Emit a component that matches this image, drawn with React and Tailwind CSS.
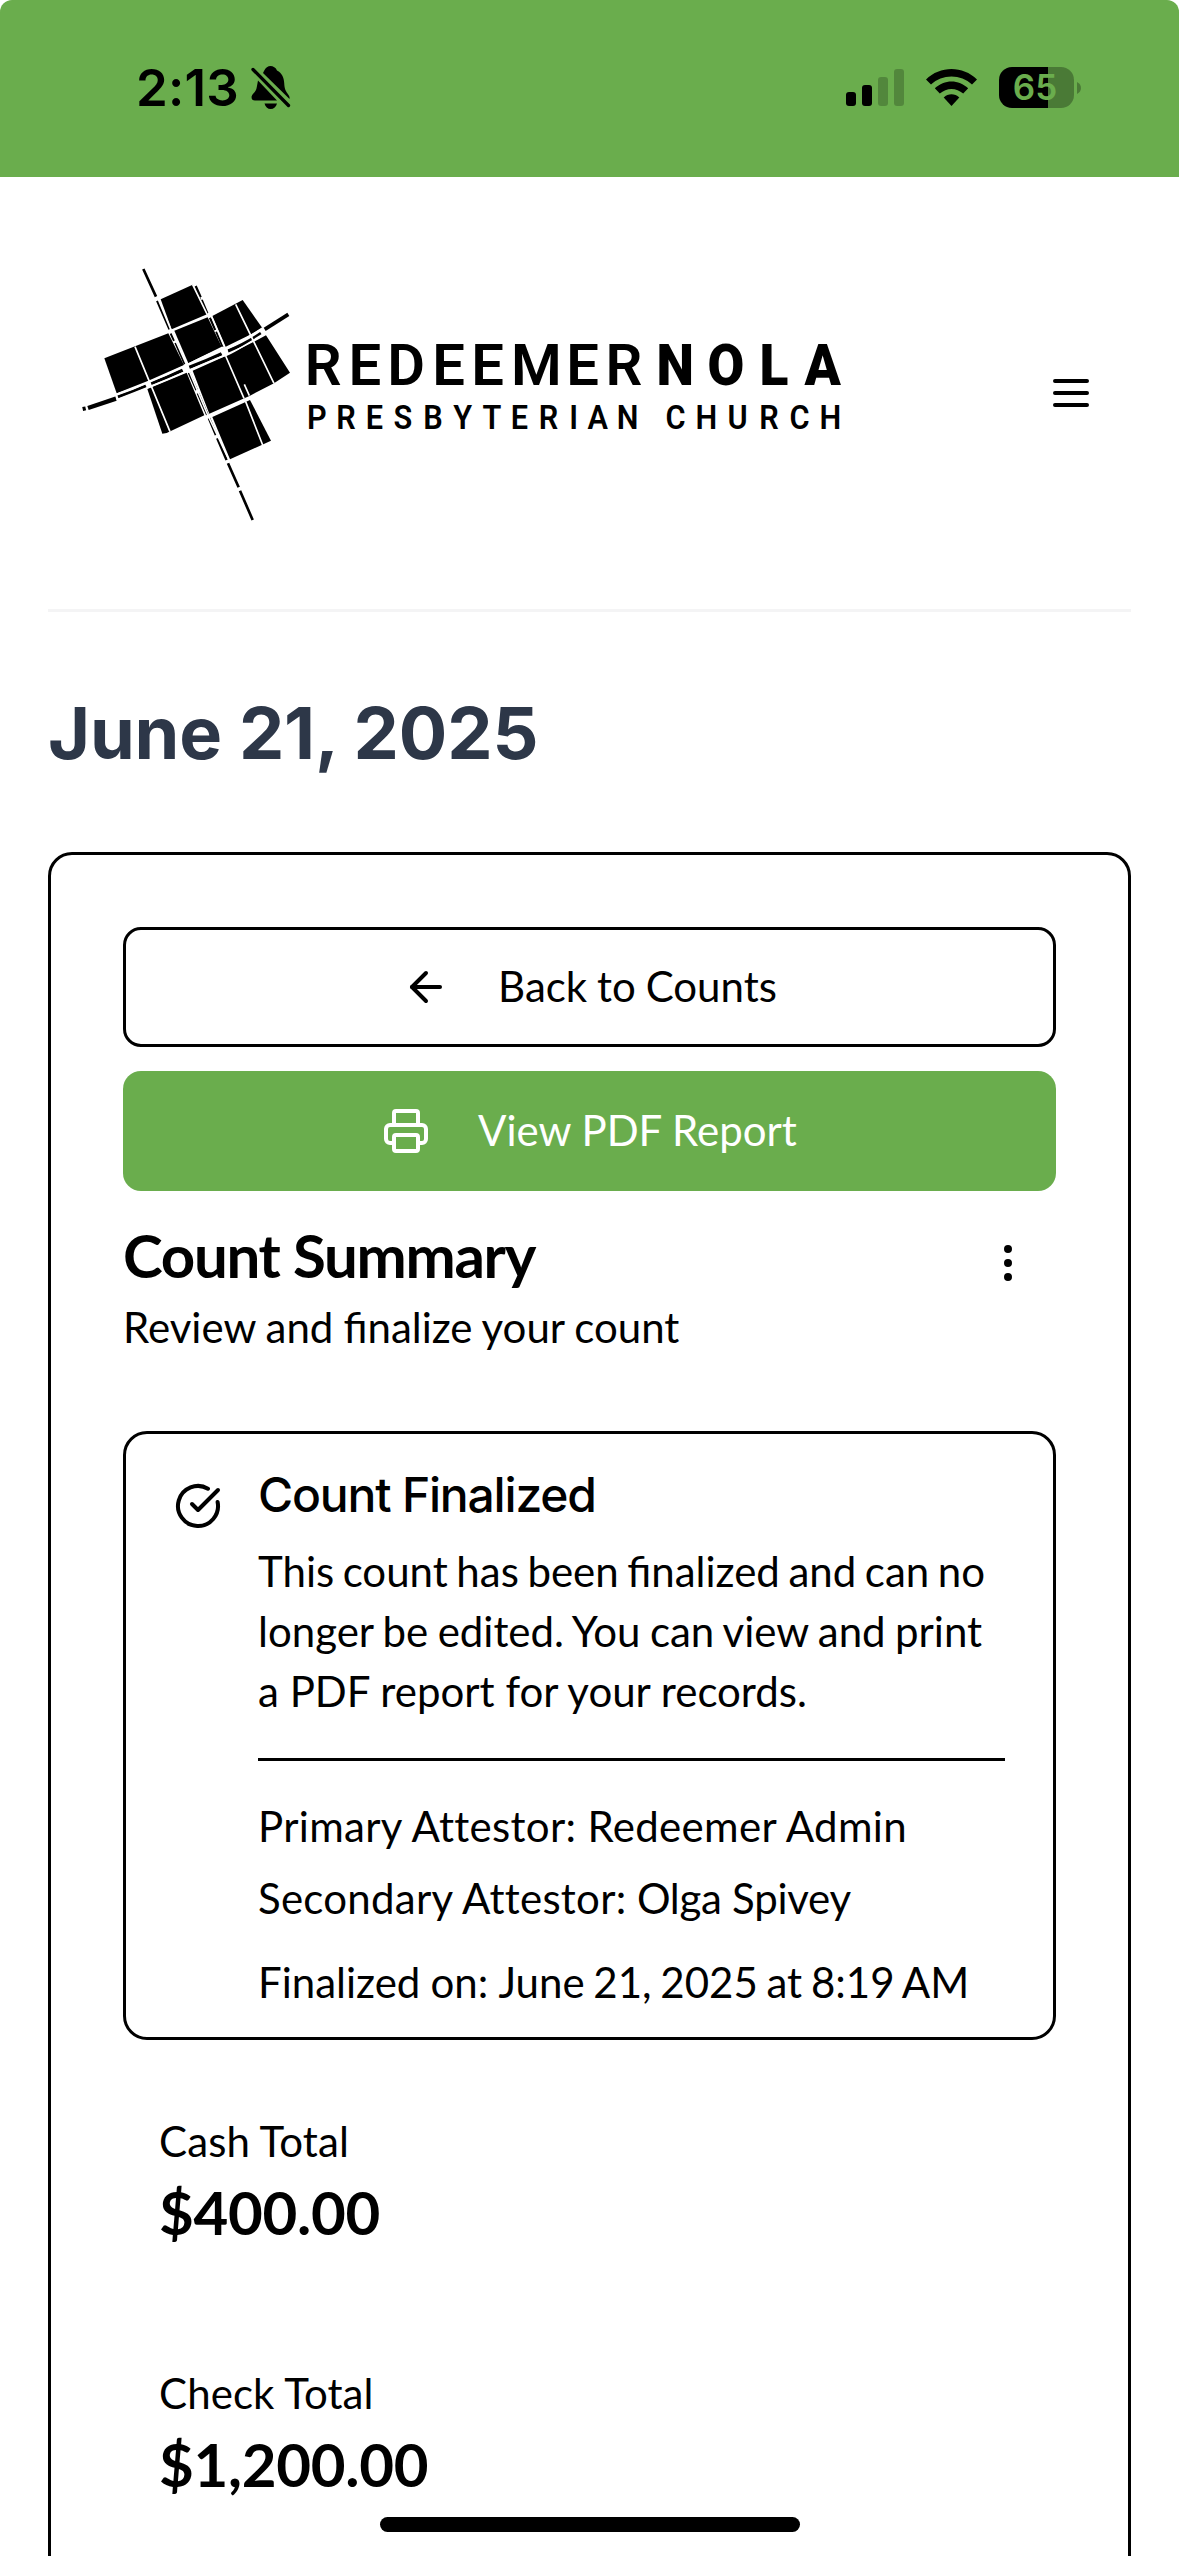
import React from "react";
import { ArrowLeft, CircleCheckBig, EllipsisVertical, Printer } from "lucide-react";

function StatusBar() {
  return (
    <div className="shrink-0 bg-white">
      <div className="flex h-[177px] items-start justify-between rounded-t-[12px] bg-[#6aad4d] pr-[98px] pl-[136px] text-black">
        <div className="flex items-center pt-[57px]">
          <span className="w-[115px] font-['Inter'] text-[51px] leading-[62px] font-semibold tracking-[0.2px] whitespace-nowrap">2:13</span>
          <svg className="h-[44px] w-[40px]" viewBox="0 0 40 44">
            <path d="M13 5C14.500 1.500 17 0 19.500 0s5.500 1.500 6.500 4.500C31 7 33 12 33.200 17c.3 5 .8 7 3.300 10.500 1.600 2 2.400 3.200 2 5.500L12 7z" />
            <path d="M7 14.500 26 34.500H4C1.500 34.500.3 33 .6 30.500 1 28 5 26.500 5.800 21z" />
            <path d="M13.500 37.500h12.500c-.8 3.500-3.300 5.500-6.300 5.500s-5.400-2-6.200-5.500z" />
            <path d="M2 3.500 37.500 39.500" stroke="#000" strokeWidth="3.300" strokeLinecap="round" />
          </svg>
        </div>
        <div className="flex items-start pt-[67px]">
          <svg className="mt-[2px] h-[37px] w-[58px]" viewBox="0 0 58 37">
            <rect x="0" y="23" width="10" height="14" rx="3" />
            <rect x="16" y="16" width="10" height="21" rx="3" />
            <rect x="32" y="8" width="10" height="29" rx="3" opacity=".22" />
            <rect x="48" y="0" width="10" height="37" rx="3" opacity=".22" />
          </svg>
          <svg className="mt-[2px] ml-[22px] h-[37px] w-[51px]" viewBox="0 0 51 37">
            <path d="M0 10.500C14-3.500 37-3.500 51 10.500l-5 5C35 4.700 16 4.700 5 15.500z" />
            <path d="M8.800 19.300c9.500-9.200 24-9.200 33.400 0l-5 5.300c-6.700-6.300-16.700-6.300-23.400 0z" />
            <path d="M17.700 28.500c4.500-4.300 11.100-4.300 15.600 0L25.500 37z" />
          </svg>
          <div className="ml-[22px] flex items-center">
            <div className="flex h-[41px] w-[75px] items-center justify-center rounded-[13px] bg-[linear-gradient(to_right,#000_49px,#4a7a36_49px)]">
              <span className="ml-[-3px] font-['Inter'] text-[35px] leading-[41px] font-semibold text-[#6aad4d]">65</span>
            </div>
            <svg className="ml-[3px] h-[12px] w-[4px]" viewBox="0 0 4 12">
              <path d="M0 0c5.300 2.500 5.300 9.500 0 12z" fill="#4a7a36" />
            </svg>
          </div>
        </div>
      </div>
    </div>
  );
}

function Logo() {
  return (
    <svg className="mt-[3px] h-[290px] w-[790px]" viewBox="0 0 790 290" role="img" aria-label="Redeemer NOLA Presbyterian Church">
      <g transform="scale(.33333)">
        <g fill="#000">
          <path d="M272 148 368 104 382 122 413 192 305 238z" />
          <path d="M103 325 295 250 342 345 235 392 140 430z" />
          <path d="M313 242 413 202 455 290 355 340z" />
          <path d="M427 198 518 150 577 234 545 252 467 290z" />
          <path d="M232 417 350 368 403 496 290 549 277 551z" />
          <path d="M368 362 465 319 550 276 588 256 660 368 612 400 540 437 418 491z" />
          <path d="M427 501 540 450 603 572 480 628z" />
        </g>
        <g fill="none" stroke="#000">
          <path d="M54 474 138 446" strokeWidth="13" />
          <path d="M38 477 47 475" strokeWidth="12" />
          <path d="M144 441Q190 426 228 408M242 401Q290 384 338 361M358 352Q410 332 455 311M474 303Q530 280 573 250" strokeWidth="10" />
          <path d="M584 238 655 193" strokeWidth="11" />
          <path d="M220 57 258 140M262 152 299 238M303 250 313 272M317 278 345 342M357 368 380 420M384 430 412 494M417 505 438 555M442 565 470 630M474 640 506 712M510 722 548 810" strokeWidth="8" />
          <path d="M377 108 392 142M395 150 412 190M420 203 436 240M439 245 458 290" strokeWidth="7" />
        </g>
        <g fill="none" stroke="#fff" strokeWidth="5">
          <path d="M195 290 300 545M497 163 612 400M467 318 522 445M527 455 578 585M523 403 538 437" />
          <path d="M368 104 413 196M265 148 303 240 350 345 412 492 476 628M424 198 462 288" />
          <path d="M138 434Q240 400 348 346T465 296 578 234M140 449Q240 412 350 364T468 316 584 250" />
        </g>
        <circle cx="348" cy="353" r="8" fill="#fff" />
        <circle cx="463" cy="302" r="10" fill="#fff" />
        <circle cx="235" cy="404" r="6" fill="#fff" />
      </g>
      <g fill="#000" fontFamily="Roboto, sans-serif">
        <text fontSize="58" fontWeight="600" y="134.700" x="234.700 278.400 317.200 362.300 401.200 441.100 496.200 535.500">REDEEMER</text>
        <g transform="scale(.92 1)">
          <text fontSize="58" fontWeight="900" y="134.700" x="637.500 693 749.500 798.500">NOLA</text>
        </g>
        <g transform="scale(.93 1)">
          <text fontSize="33" fontWeight="600" y="179" x="254.800 286.300 318.100 347.800 379.800 412 443.500 474 504.100 536.900 556.500 588 618.300 640.300 672.600 707 741 773.700 805.800">PRESBYTERIAN CHURCH</text>
        </g>
      </g>
    </svg>
  );
}

function Header() {
  return (
    <header className="mx-[48px] flex h-[435px] shrink-0 items-center justify-between border-b-[3px] border-[#f4f4f5] pr-[36px] pl-[22px]">
      <Logo />
      <svg className="size-[48px]" viewBox="0 0 24 24" fill="none" stroke="#000" strokeWidth="2" strokeLinecap="round">
        <path d="M4 6h16M4 12h16M4 18h16" />
      </svg>
    </header>
  );
}

function Total({ label, value }) {
  return (
    <div className="h-[252px] pl-[36px]">
      <p className="leading-[60px] tracking-[0.1px]">{label}</p>
      <p className="mt-[5px] text-[60px] leading-[72px] font-bold tracking-[-0.3px]">{value}</p>
    </div>
  );
}

export default function App() {
  return (
    <div className="relative flex h-[2556px] w-[1179px] flex-col overflow-hidden bg-white font-['Lato',sans-serif] text-[42px] text-black">
      <StatusBar />
      <Header />
      <h1 className="mx-[48px] mt-[76px] shrink-0 font-['Inter'] text-[72px] leading-[90px] font-bold tracking-[-0.15px] text-[#2d3748]">June 21, 2025</h1>
      <main className="mx-[48px] mt-[74px] h-[1800px] shrink-0 rounded-[24px] border-[3px] border-black p-[72px]">
        <button className="flex h-[120px] w-full items-center justify-center gap-[48px] rounded-[18px] border-[3px] border-black">
          <ArrowLeft className="size-[48px]" strokeWidth={2} />
          <span className="pb-[2px] leading-[60px] [word-spacing:-0.9px]">Back to Counts</span>
        </button>
        <button className="mt-[24px] flex h-[120px] w-full items-center justify-center gap-[48px] rounded-[18px] bg-[#6aad4d] text-white">
          <Printer className="size-[48px]" strokeWidth={2} />
          <span className="pb-[2px] leading-[60px]">View PDF Report</span>
        </button>
        <div className="mt-[24px] flex h-[216px] items-start justify-between">
          <div className="pt-[10px]">
            <h2 className="text-[60px] leading-[60px] font-bold tracking-[-1.3px]">Count Summary</h2>
            <p className="mt-[12px] leading-[60px] [word-spacing:-0.7px]">Review and finalize your count</p>
          </div>
          <button className="flex size-[96px] items-center justify-center">
            <EllipsisVertical className="size-[48px]" strokeWidth={2} />
          </button>
        </div>
        <section className="flex h-[609px] gap-[36px] rounded-[24px] border-[3px] border-black px-[48px] pt-[36px]">
          <CircleCheckBig className="mt-[12px] size-[48px] shrink-0" strokeWidth={2} />
          <div className="flex-1 pt-px">
            <h3 className="font-['Inter'] text-[48px] leading-[48px] font-medium tracking-[-1.2px]">Count Finalized</h3>
            <p className="mt-[22px] leading-[60px] whitespace-nowrap">
              <span className="[word-spacing:-2.2px]">This count has been finalized and can no</span>
              <br />
              <span className="[word-spacing:-1.4px]">longer be edited. You can view and print</span>
              <br />a PDF report for your records.
            </p>
            <div className="mt-[37px] border-t-[3px] border-black pt-[35px] leading-[60px] whitespace-nowrap [font-variant-ligatures:none]">
              <p className="tracking-[0.32px]">Primary Attestor: Redeemer Admin</p>
              <p className="mt-[12px]">
                <span className="tracking-[0.26px]">Secondary Attestor:</span>
                <span className="tracking-[-0.28px]"> Olga Spivey</span>
              </p>
              <p className="mt-[24px]">
                <span className="[word-spacing:-0.6px]">Finalized on: </span>
                <span className="[word-spacing:-2px]">June 21, 2025 at 8:19 AM</span>
              </p>
            </div>
          </div>
        </section>
        <div className="pt-[71px]">
          <Total label="Cash Total" value="$400.00" />
          <Total label="Check Total" value="$1,200.00" />
        </div>
      </main>
      <div className="absolute bottom-[24px] left-[380px] h-[15px] w-[420px] rounded-full bg-black" />
    </div>
  );
}
